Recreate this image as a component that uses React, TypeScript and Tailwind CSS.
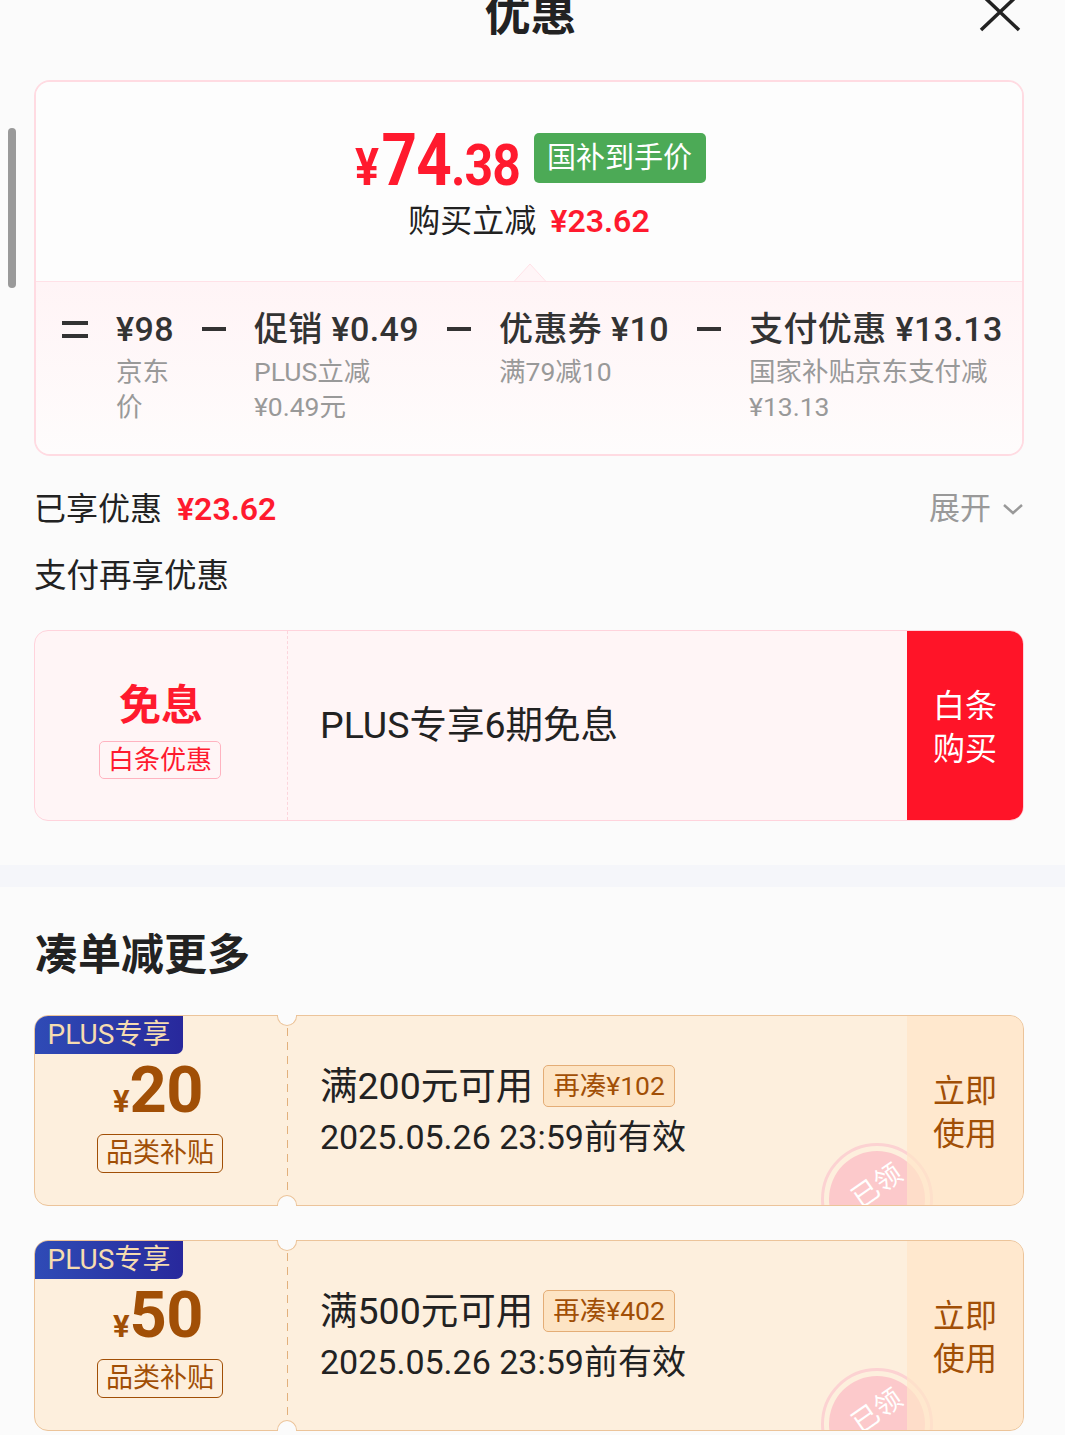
import React from "react";

const Minus = () => (
  <div className="h-[40px] flex items-center shrink-0">
    <div className="w-[24px] h-[4px] bg-[#333]" />
  </div>
);

const Item = ({ main, subs }: { main: string; subs: string[] }) => (
  <div className="flex flex-col shrink-0">
    <div className="text-[34px] leading-[40px] text-[#333] font-medium tracking-[0.4px] whitespace-nowrap">{main}</div>
    <div className="mt-[5px] text-[26.5px] leading-[35px] text-[#999]">
      {subs.map((s, i) => (
        <div key={i} className="whitespace-nowrap">{s}</div>
      ))}
    </div>
  </div>
);

const Coupon = ({ amount, title, need }: { amount: string; title: string; need: string }) => (
  <div className="relative h-[191px] rounded-[14px] border border-[#ecc49a] bg-[#fdefdd] flex">
    <div className="absolute inset-0 rounded-[13px] overflow-hidden">
      <div className="absolute left-[786px] top-[127px] w-[112px] h-[112px] rounded-full border-[3px] border-[#fcd2d2] p-[5px]">
        <div className="w-full h-full rounded-full bg-[#fcc9cb] flex items-start justify-center pt-[20px]">
          <span className="text-white text-[27px] leading-[30px] -rotate-[35deg] inline-block">已领</span>
        </div>
      </div>
    </div>
    <div className="absolute left-0 top-0 h-[38px] w-[148px] rounded-tl-[13px] rounded-br-[7px] bg-gradient-to-r from-[#2f4bb6] to-[#28289c] flex items-center justify-center text-[28px] text-[#f6dcb0]">
      PLUS专享
    </div>
    <div className="w-[252px] shrink-0 flex flex-col items-center pt-[44px]">
      <div className="h-[60px] leading-[60px] text-[#a14f06] font-bold whitespace-nowrap -translate-x-[3px]">
        <span className="text-[31px]">¥</span>
        <span className="text-[65px] tracking-[-0.5px]">{amount}</span>
      </div>
      <div className="mt-[14px] h-[39px] px-[8px] rounded-[6px] border border-[#a14f06] text-[#a14f06] text-[27px] leading-[37px] -translate-x-[1px]">
        品类补贴
      </div>
    </div>
    <div className="relative w-0">
      <div className="absolute left-[-10px] top-[-1px] w-[20px] h-[11px] rounded-b-full bg-[#fbfbfb] border border-t-0 border-[#ecc49a]" />
      <div className="absolute left-[-10px] bottom-[-1px] w-[20px] h-[11px] rounded-t-full bg-[#fbfbfb] border border-b-0 border-[#ecc49a]" />
      <div className="absolute left-0 top-[12px] bottom-[12px] w-[1px] bg-[repeating-linear-gradient(to_bottom,#e2b07c_0_8px,transparent_8px_14px)]" />
    </div>
    <div className="relative flex-1 pl-[33px] pt-[48px]">
      <div className="flex items-center h-[44px]">
        <span className="text-[37.5px] text-[#222] whitespace-nowrap">{title}</span>
        <span className="ml-[10px] h-[42px] px-[9px] rounded-[5px] border border-[#e4ad76] bg-[#fde4c4] text-[#a14f06] text-[26.5px] leading-[40px] whitespace-nowrap">
          {need}
        </span>
      </div>
      <div className="mt-[7px] text-[34px] leading-[44px] text-[#222] whitespace-nowrap">2025.05.26 23:59前有效</div>
    </div>
    <div className="relative w-[116px] shrink-0 rounded-r-[13px] bg-[#ffe6c8]/70 flex flex-col items-center justify-center pt-[4px] text-[32px] leading-[43px] text-[#a14f06]">
      <div>立即</div>
      <div>使用</div>
    </div>
  </div>
);

export default function App() {
  return (
    <div className="relative w-[1065px] h-[1435px] overflow-hidden bg-[#fbfbfb] font-['Roboto','Noto_Sans_CJK_SC',sans-serif] text-[#222]">
      <div className="absolute left-[8px] top-[128px] w-[8px] h-[160px] rounded-full bg-[#9a9a9a]" />

      {/* header */}
      <div className="relative h-[80px] flex justify-center">
        <div className="mt-[-9px] text-[46px] leading-[46px] font-bold text-[#222] -translate-x-[2px]">优惠</div>
        <svg className="absolute left-[979px] top-[-8px]" width="42" height="40" viewBox="0 0 42 40">
          <path d="M2 2 L40 38 M40 2 L2 38" stroke="#222" strokeWidth="3.5" fill="none" />
        </svg>
      </div>

      <div className="px-[34px] pr-[41px]">
        {/* price card */}
        <div className="h-[376px] rounded-[16px] border-2 border-[#ffdbe2] overflow-hidden flex flex-col">
          <div className="h-[199px] bg-[#fdfdfd] flex flex-col items-center pt-[51px]">
            <div className="flex items-center h-[50px] gap-[13px] translate-x-[1px]">
              <div className="w-[166px] h-[50px] text-[#ff1a2e] font-bold translate-y-[3px]">
                <div className="inline-block origin-left scale-x-[0.86] whitespace-nowrap text-[72px] leading-[50px] tracking-[-1px]">
                  <span className="text-[52px] mr-[4px]">¥</span>
                  <span>74</span>
                  <span className="text-[58px]">.38</span>
                </div>
              </div>
              <div className="h-[50px] w-[172px] rounded-[5px] bg-[#4caa56] text-white text-[29px] flex items-center justify-center pt-[2px]">
                国补到手价
              </div>
            </div>
            <div className="mt-[18px] text-[32px] leading-[40px] whitespace-nowrap">
              <span className="text-[#222]">购买立减</span>
              <span className="ml-[14px] text-[#ff1a2e] font-semibold">¥23.62</span>
            </div>
          </div>
          <div className="relative h-[1px] bg-[#ffe1e7]">
            <svg className="absolute left-[478px] top-[-18px]" width="32" height="19" viewBox="0 0 32 19">
              <path d="M0 18.5 L16 1 L32 18.5 Z" fill="#fff5f7" stroke="#ffe1e7" strokeWidth="1" />
            </svg>
          </div>
          <div className="flex-1 bg-gradient-to-b from-[#fff4f6] to-[#fefcfc] flex items-start pl-[26px] pt-[27px] gap-[28px]">
            <div className="h-[40px] flex flex-col justify-center gap-[9px] shrink-0">
              <div className="w-[26px] h-[4px] bg-[#333]" />
              <div className="w-[26px] h-[4px] bg-[#333]" />
            </div>
            <Item main="¥98" subs={["京东", "价"]} />
            <Minus />
            <Item main="促销 ¥0.49" subs={["PLUS立减", "¥0.49元"]} />
            <Minus />
            <Item main="优惠券 ¥10" subs={["满79减10"]} />
            <Minus />
            <Item main="支付优惠 ¥13.13" subs={["国家补贴京东支付减", "¥13.13"]} />
          </div>
        </div>

        <div className="mt-[31px] h-[44px] flex items-center justify-between">
          <div className="text-[32px] leading-[44px] whitespace-nowrap">
            <span className="text-[#222]">已享优惠</span>
            <span className="ml-[15px] text-[#ff1a2e] font-semibold">¥23.62</span>
          </div>
          <div className="flex items-center text-[31px] text-[#999]">
            <span>展开</span>
            <svg className="ml-[11px]" width="22" height="14" viewBox="0 0 22 14">
              <path d="M2 3 L11 11 L20 3" stroke="#999" strokeWidth="2.5" fill="none" />
            </svg>
          </div>
        </div>

        <div className="mt-[23px] text-[32.5px] leading-[44px] text-[#222]">支付再享优惠</div>

        <div className="mt-[32px] h-[191px] rounded-[14px] border border-[#ffd3dc] bg-[#fff5f6] flex overflow-hidden">
          <div className="w-[252px] shrink-0 flex flex-col items-center pt-[50px]">
            <div className="text-[42px] leading-[50px] font-bold text-[#ff1a2e]">免息</div>
            <div className="mt-[10px] h-[38px] px-[8px] rounded-[5px] border border-[#ffb3c0] text-[#ff1a2e] text-[26px] leading-[36px] -translate-x-[1px]">
              白条优惠
            </div>
          </div>
          <div className="w-0 border-l border-dashed border-[#fcd5dc]" />
          <div className="flex-1 flex items-center pl-[32px] text-[37.5px] text-[#222]">PLUS专享6期免息</div>
          <div className="w-[116px] shrink-0 bg-[#ff1428] flex flex-col items-center justify-center pt-[4px] text-white text-[32px] leading-[43px]">
            <div>白条</div>
            <div>购买</div>
          </div>
        </div>
      </div>

      <div className="mt-[44px] h-[22px] bg-[#f5f6fa]" />

      <div className="px-[34px] pr-[41px]">
        <div className="mt-[43px] text-[43px] leading-[50px] font-bold text-[#222] pl-[1px]">凑单减更多</div>
        <div className="mt-[35px]">
          <Coupon amount="20" title="满200元可用" need="再凑¥102" />
        </div>
        <div className="mt-[34px]">
          <Coupon amount="50" title="满500元可用" need="再凑¥402" />
        </div>
      </div>
    </div>
  );
}
